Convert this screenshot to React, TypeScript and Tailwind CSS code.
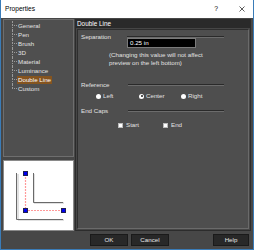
const TREE = ["General", "Pen", "Brush", "3D", "Material", "Luminance", "Double Line", "Custom"];

function Groove({ className = "" }: { className?: string }) {
  return <div className={`h-[2px] border-t border-t-[#2a2a2a] border-b border-b-[#6c6c6c] ${className}`} />;
}

function Radio({ label, checked, width }: { label: string; checked?: boolean; width: string }) {
  return (
    <div className={`flex items-center gap-[2px] ${width}`}>
      <span className="flex h-[5px] w-[5px] items-center justify-center rounded-full bg-white">
        {checked && <span className="h-[2px] w-[2px] rounded-full bg-[#222]" />}
      </span>
      <span>{label}</span>
    </div>
  );
}

function Check({ label, width }: { label: string; width: string }) {
  return (
    <div className={`flex items-center gap-[3px] ${width}`}>
      <span className="h-[5px] w-[5px] border border-[#bbb] bg-white" />
      <span>{label}</span>
    </div>
  );
}

function Preview() {
  return (
    <svg width="69" height="69" viewBox="0 0 69 69">
      {/* outer L */}
      <path d="M13 12 V58 H59" fill="none" stroke="#c4c4c4" strokeWidth="1" transform="translate(1 1)" />
      <path d="M12.5 12 V58.5 H59" fill="none" stroke="#6a6a6a" strokeWidth="1" />
      {/* inner L */}
      <path d="M29 12 V41 H59" fill="none" stroke="#c4c4c4" strokeWidth="1" transform="translate(1 1)" />
      <path d="M29.5 12 V41.5 H59" fill="none" stroke="#6a6a6a" strokeWidth="1" />
      {/* reference guide */}
      <path d="M21.5 13 V49.5 H59" fill="none" stroke="#ff9a9a" strokeWidth="1.2" strokeDasharray="2 1" />
      <rect x="19.5" y="10.5" width="4" height="4" fill="#0000f0" stroke="#202050" />
      <rect x="19.5" y="47.5" width="4" height="4" fill="#0000f0" stroke="#202050" />
      <rect x="57.5" y="47.5" width="4" height="4" fill="#0000f0" stroke="#202050" />
    </svg>
  );
}

export default function App() {
  return (
    <div className="flex h-[250px] w-[254px] flex-col overflow-hidden border-x border-b border-[#3a7cb8] font-['Liberation_Sans',Arial,sans-serif] text-[6.2px] leading-[8px]">
      <div className="flex h-[18px] items-center bg-white pl-[4px] text-[6.6px] text-black">
        <span>Properties</span>
        <span className="ml-auto mr-[21px] text-[6.8px]">?</span>
        <svg width="6" height="6" viewBox="0 0 6 6" className="mr-[8px]">
          <path d="M0.5 0.5 L5.5 5.5 M5.5 0.5 L0.5 5.5" stroke="#333" strokeWidth="0.8" />
        </svg>
      </div>

      <div className="flex flex-1 flex-col bg-[#474747] px-[2px] pt-[1px] text-[#e2e2e2]">
        <div className="flex h-[212px] gap-[1px]">
          <div className="flex w-[71px] flex-col gap-[3px]">
            <div className="h-[138px] border border-[#6e6e6e] bg-[#4f4f4f] pl-[8px] pt-[1px]">
              {TREE.map((t, i) => (
                <div key={t} className="flex h-[9px] items-stretch">
                  <div className="flex w-[5px] flex-col">
                    <div className="h-[4px] border-l border-dotted border-[#9a9a9a]" />
                    <div
                      className={`flex-1 border-t border-dotted border-[#9a9a9a] ${i < TREE.length - 1 ? "border-l" : ""}`}
                    />
                  </div>
                  <div className="flex items-center">
                    <span className={`px-[1px] ${t === "Double Line" ? "bg-[#85541f] text-white" : ""}`}>{t}</span>
                  </div>
                </div>
              ))}
            </div>
            <div className="flex-1 border border-[#8a8a8a] bg-white">
              <Preview />
            </div>
          </div>

          <div className="flex w-[176px] flex-col border border-[#2c2c2c] bg-[#464646]">
            <div className="h-[8px] bg-[#2a2a2a] pl-[1px] text-[6.4px] leading-[8px] text-white">Double Line</div>
            <div className="m-[1px] flex flex-1 flex-col border border-t-[#2e2e2e] border-l-[#2e2e2e] border-r-[#6a6a6a] border-b-[#6a6a6a] bg-[#4e4e4e]">
              <div className="mt-[3px] flex">
                <div className="w-[49px] pl-[3px]">Separation</div>
                <div className="flex flex-col pt-[3px]">
                  <Groove className="w-[97px]" />
                  <div className="h-[10px] w-[69px] border border-[#7a7a7a] bg-black pl-[2px] text-[6.2px] leading-[8px] text-white">
                    0.25 in
                  </div>
                </div>
              </div>
              <div className="mt-[3px] pl-[31px]">
                <div>(Changing this value will not affect</div>
                <div>preview on the left bottom)</div>
              </div>

              <div className="mt-[14px] flex items-center">
                <div className="w-[50px] pl-[3px]">Reference</div>
                <Groove className="w-[96px]" />
              </div>
              <div className="mt-[3px] flex items-center pl-[18px]">
                <Radio label="Left" width="w-[43px]" />
                <Radio label="Center" checked width="w-[42px]" />
                <Radio label="Right" width="w-[40px]" />
              </div>

              <div className="mt-[7px] flex items-center">
                <div className="w-[50px] pl-[3px]">End Caps</div>
                <Groove className="w-[96px]" />
              </div>
              <div className="mt-[6px] flex items-center pl-[40px]">
                <Check label="Start" width="w-[45px]" />
                <Check label="End" width="w-[40px]" />
              </div>
            </div>
          </div>
        </div>

        <div className="flex h-[18px] items-start pt-[3px]">
          <button className="ml-[87px] h-[12px] w-[38px] border border-[#1a1a1a] bg-[#282828] text-[6.2px] leading-[10px] text-[#e6e6e6]">
            OK
          </button>
          <button className="ml-[3px] h-[12px] w-[38px] border border-[#1a1a1a] bg-[#282828] text-[6.2px] leading-[10px] text-[#e6e6e6]">
            Cancel
          </button>
          <button className="ml-auto mr-[2px] h-[12px] w-[36px] border border-[#1a1a1a] bg-[#282828] text-[6.2px] leading-[10px] text-[#e6e6e6]">
            Help
          </button>
        </div>
      </div>
    </div>
  );
}
